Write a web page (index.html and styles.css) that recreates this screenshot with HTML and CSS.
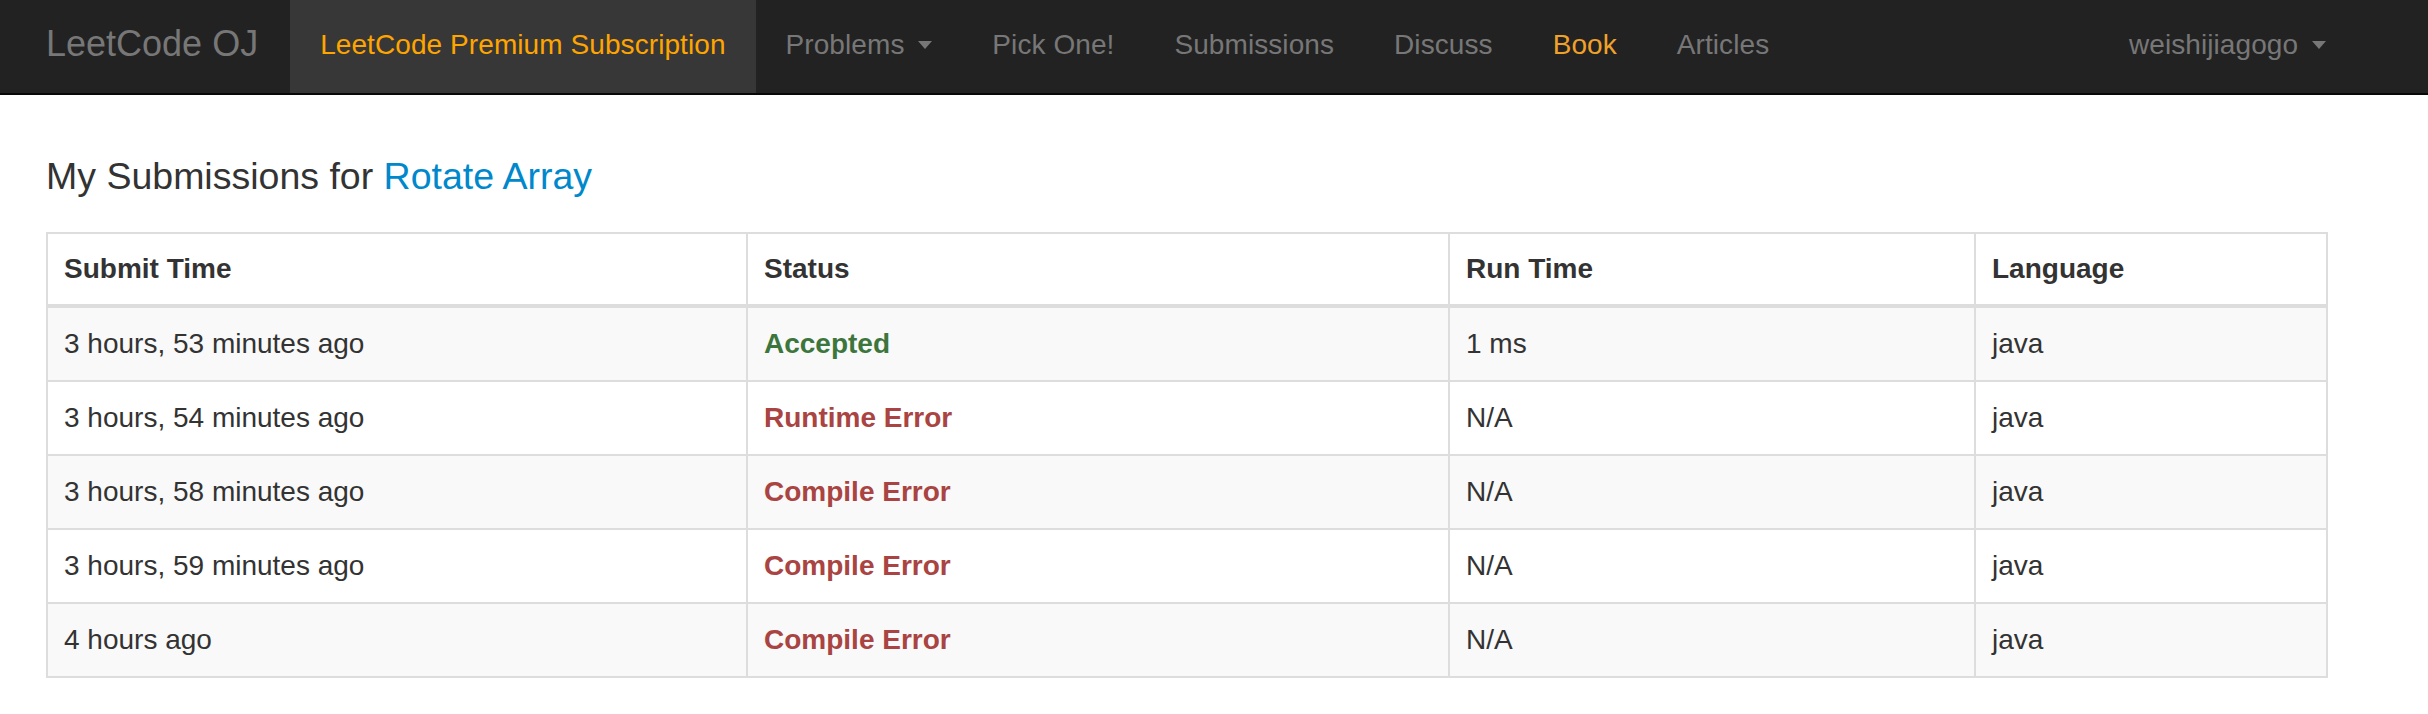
FILE: index.html
```html
<!DOCTYPE html>
<html lang="en">
<head>
<meta charset="utf-8">
<title>My Submissions - LeetCode OJ</title>
<link rel="stylesheet" href="styles.css">
</head>
<body>
<nav class="navbar">
  <a class="brand" href="#">LeetCode OJ</a>
  <ul class="nav">
    <li class="active"><a class="premium" href="#">LeetCode Premium Subscription</a></li>
    <li><a href="#">Problems <span class="caret"></span></a></li>
    <li><a href="#">Pick One!</a></li>
    <li><a href="#">Submissions</a></li>
    <li><a href="#">Discuss</a></li>
    <li><a class="book" href="#">Book</a></li>
    <li><a href="#">Articles</a></li>
  </ul>
  <ul class="nav nav-right">
    <li><a href="#">weishijiagogo <span class="caret"></span></a></li>
  </ul>
</nav>
<main class="container">
  <h3 class="title">My Submissions for <a href="#">Rotate Array</a></h3>
  <table class="table">
    <colgroup>
      <col class="c1"><col class="c2"><col class="c3"><col class="c4">
    </colgroup>
    <thead>
      <tr><th>Submit Time</th><th>Status</th><th>Run Time</th><th>Language</th></tr>
    </thead>
    <tbody>
      <tr><td>3 hours, 53 minutes ago</td><td><a class="ok" href="#">Accepted</a></td><td>1 ms</td><td>java</td></tr>
      <tr><td>3 hours, 54 minutes ago</td><td><a class="err" href="#">Runtime Error</a></td><td>N/A</td><td>java</td></tr>
      <tr><td>3 hours, 58 minutes ago</td><td><a class="err" href="#">Compile Error</a></td><td>N/A</td><td>java</td></tr>
      <tr><td>3 hours, 59 minutes ago</td><td><a class="err" href="#">Compile Error</a></td><td>N/A</td><td>java</td></tr>
      <tr><td>4 hours ago</td><td><a class="err" href="#">Compile Error</a></td><td>N/A</td><td>java</td></tr>
    </tbody>
  </table>
</main>
</body>
</html>
```

FILE: styles.css
```css
html, body {
  margin: 0;
  padding: 0;
  background: #fff;
}
body {
  font-family: "Liberation Sans", Arial, "Helvetica Neue", sans-serif;
  font-size: 28px;
  line-height: 40px;
  color: #333;
}
a {
  text-decoration: none;
}

.navbar {
  display: flex;
  align-items: stretch;
  height: 93px;
  background: #222;
  border-bottom: 2px solid #080808;
  padding: 0 72px 0 16px;
}
.brand {
  display: block;
  padding: 24px 32px 29px 30px;
  font-size: 36px;
  line-height: 40px;
  color: #777;
}
.nav {
  display: flex;
  list-style: none;
  margin: 0;
  padding: 0;
}
.nav-right {
  margin-left: auto;
}
.nav li a {
  display: block;
  height: 93px;
  box-sizing: border-box;
  padding: 25px 30px 28px;
  font-size: 28px;
  line-height: 40px;
  letter-spacing: 0.08px;
  color: #777;
  white-space: nowrap;
}
.nav li.active a {
  background: #373737;
}
.nav a.premium {
  color: #ffa500;
}
.nav a.book {
  color: #f0a12a;
}
.caret {
  display: inline-block;
  width: 0;
  height: 0;
  margin-left: 6px;
  vertical-align: middle;
  border-top: 8px solid #777;
  border-left: 7px solid transparent;
  border-right: 7px solid transparent;
  position: relative;
  top: -2px;
}

.container {
  padding: 0 46px;
}
.title {
  margin: 61px 0 0;
  font-size: 37.5px;
  line-height: 40px;
  font-weight: 400;
  color: #333;
}
.title a {
  color: #0088cc;
}

.table {
  margin-top: 36px;
  width: 2280px;
  table-layout: fixed;
  border-collapse: collapse;
  border: 2px solid #ddd;
}
.c1 { width: 700px; }
.c2 { width: 702px; }
.c3 { width: 526px; }
.c4 { width: 352px; }
.table th,
.table td {
  border: 2px solid #ddd;
  padding: 16px;
  text-align: left;
  vertical-align: top;
  line-height: 40px;
}
.table th {
  padding-top: 15px;
  padding-bottom: 15px;
  font-weight: 700;
}
.table thead th {
  border-bottom-width: 4px;
}
.table tbody tr:nth-child(odd) {
  background: #f9f9f9;
}
.ok {
  color: #3c763d;
  font-weight: 700;
}
.err {
  color: #a94442;
  font-weight: 700;
}
```
